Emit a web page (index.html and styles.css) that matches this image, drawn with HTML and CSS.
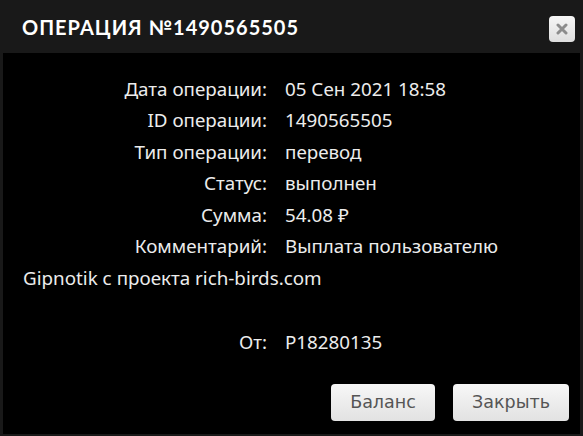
FILE: index.html
```html
<!DOCTYPE html>
<html lang="ru">
<head>
  <meta charset="UTF-8">
  <title>Операция №1490565505</title>
  <link rel="stylesheet" href="styles.css">
</head>
<body>
  <div class="dialog">
    <div class="head">
      <h1>Операция №1490565505</h1>
      <button class="close" title="Закрыть">
        <svg width="12" height="12" viewBox="0 0 12 12"><path d="M2 2 L10 10 M10 2 L2 10" stroke="#8c8c8c" stroke-width="3" stroke-linecap="round"/></svg>
      </button>
    </div>
    <div class="body">
      <div class="row"><div class="label">Дата операции:</div><div class="value">05 Сен 2021 18:58</div></div>
      <div class="row"><div class="label">ID операции:</div><div class="value">1490565505</div></div>
      <div class="row"><div class="label">Тип операции:</div><div class="value">перевод</div></div>
      <div class="row"><div class="label">Статус:</div><div class="value">выполнен</div></div>
      <div class="row"><div class="label">Сумма:</div><div class="value">54.08 ₽</div></div>
      <div class="row"><div class="label">Комментарий:</div><div class="value">Выплата пользователю</div></div>
      <div class="wrap">Gipnotik с проекта rich-birds.com</div>
      <div class="row from"><div class="label">От:</div><div class="value">P18280135</div></div>
      <div class="buttons">
        <button class="btn balance">Баланс</button>
        <button class="btn">Закрыть</button>
      </div>
    </div>
  </div>
</body>
</html>
```
FILE: styles.css
```css
body { margin: 0; background: #191919; font-family: "Noto Sans", sans-serif; }
.dialog { width: 583px; height: 436px; background: #191919; display: flex; flex-direction: column; }
.head { height: 53px; display: flex; align-items: center; justify-content: space-between; padding: 0 8px 0 22px; box-sizing: border-box; }
h1 { margin: 0; font-family: "Lato", sans-serif; font-weight: 700; font-size: 20px; letter-spacing: 1px; text-transform: uppercase; color: #fff; }
.close { width: 26px; height: 26px; margin-top: 4px; border: 0; border-radius: 4px; background: linear-gradient(#f6f6f6, #dedede); display: flex; align-items: center; justify-content: center; padding: 0; }
.body { flex: 1; margin: 0 3px 2px 3px; background: #000; color: #ececec; font-size: 18.8px; padding-top: 20px; }
.row { display: flex; height: 31.5px; align-items: center; }
.label { width: 264px; text-align: right; }
.value { margin-left: 18px; }
.wrap { padding-left: 20px; height: 32px; line-height: 32px; }
.from { margin-top: 32px; }
.buttons { display: flex; justify-content: flex-end; gap: 18px; margin-top: 26px; padding-right: 11px; }
.btn { height: 37px; width: 116px; border: 0; border-radius: 4px; background: linear-gradient(#f7f7f7, #e2e2e2); color: #555; font-family: "DejaVu Sans", sans-serif; font-size: 17.5px; padding: 0; }
.balance { width: 104px; }
```
